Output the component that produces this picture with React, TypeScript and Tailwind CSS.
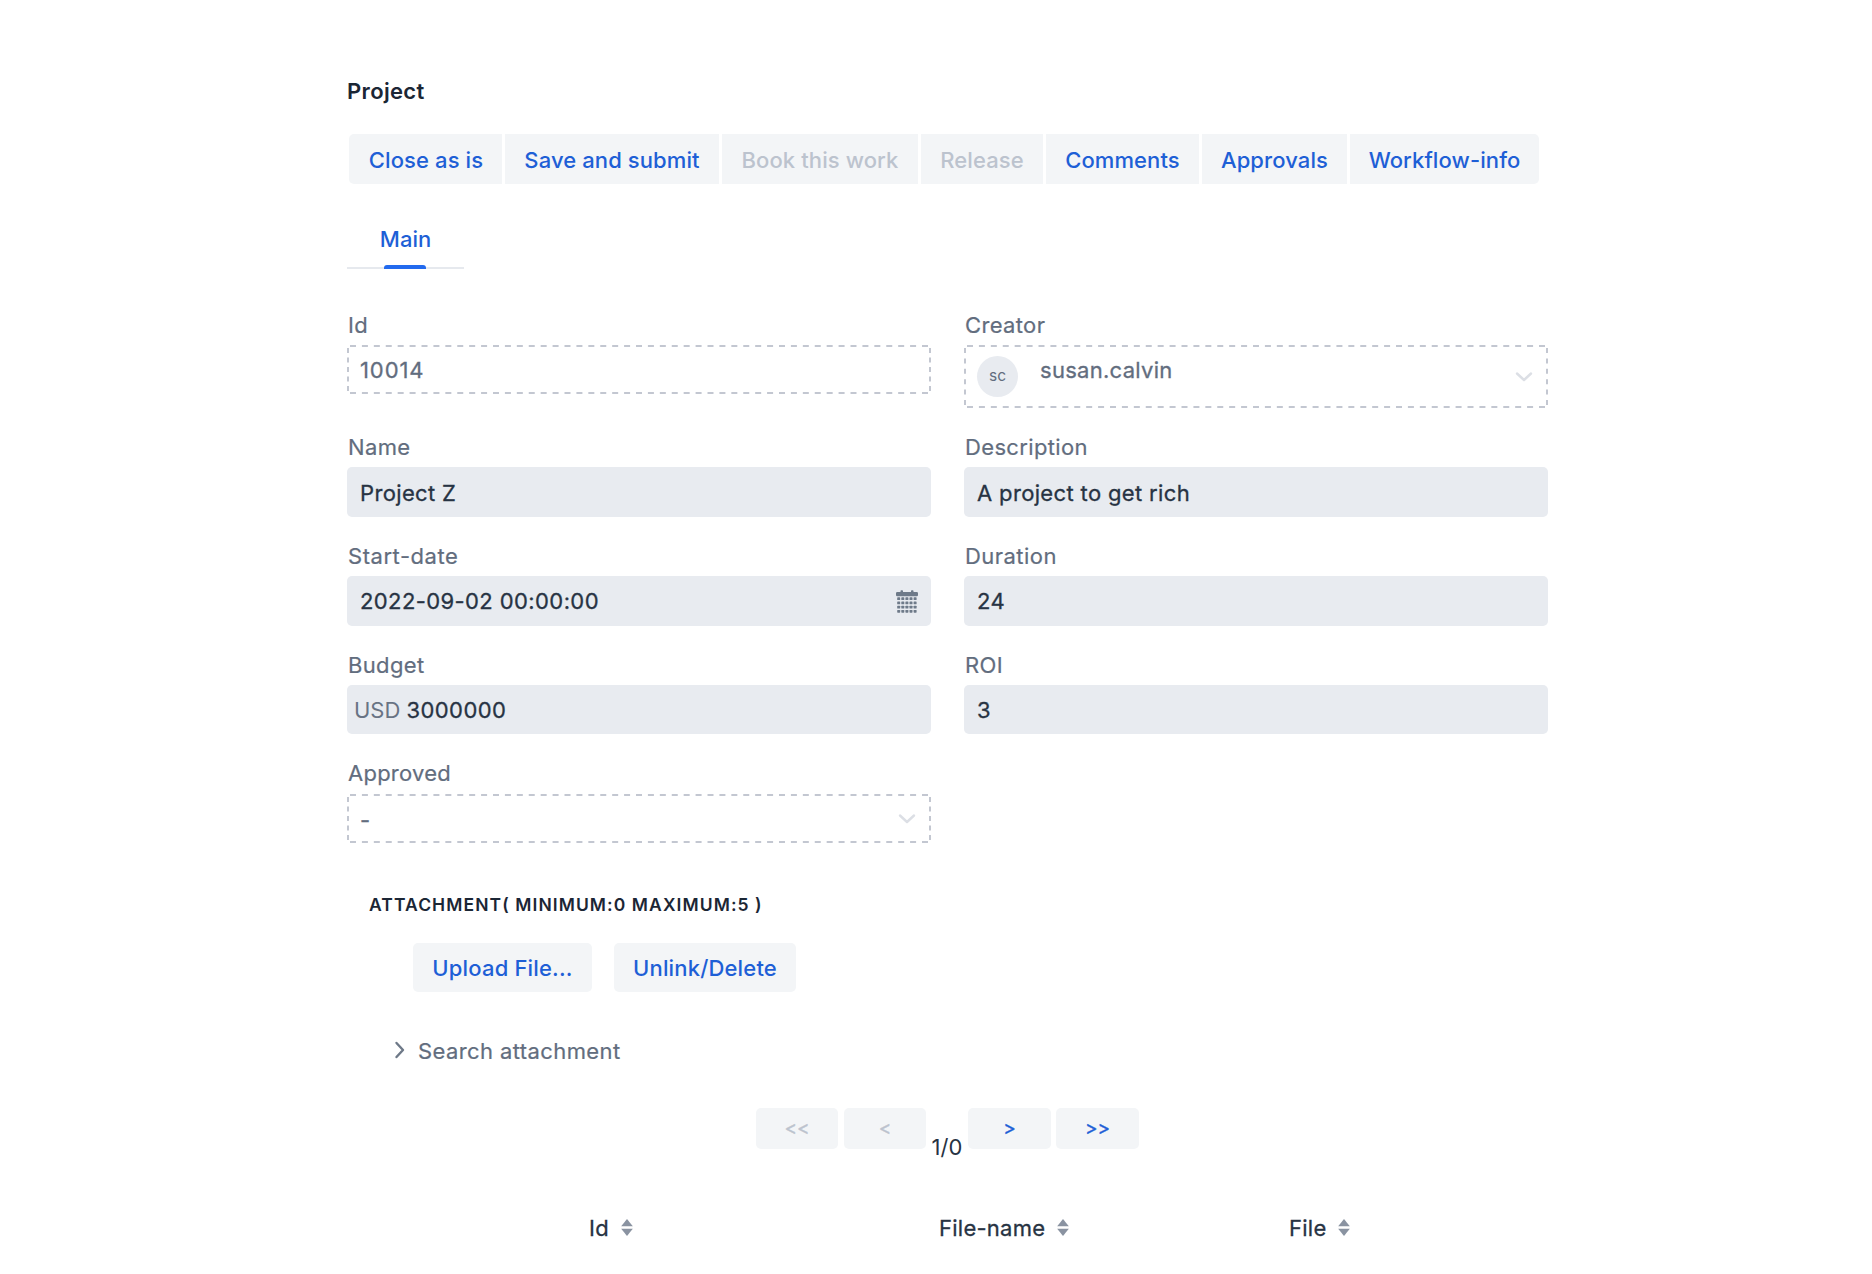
import type { ReactNode } from "react";

function Label({ children }: { children: ReactNode }) {
  return (
    <div className="mb-[6px] pl-px leading-[28px] text-[#626d7e] [-webkit-text-stroke:0.2px]">{children}</div>
  );
}

/* Evenly spaced dashed outline for read-only fields. */
function DashedOutline({ height }: { height: number }) {
  const width = 584;
  const pattern = (length: number, dash: number, count: number) => `${dash} ${(length - dash) / count - dash}`;
  const horizontal = pattern(width - 6, 6, 48);
  const vertical = pattern(height - 6, 5, height > 50 ? 5 : 4);
  return (
    <svg
      className="pointer-events-none absolute inset-0"
      width={width}
      height={height}
      stroke="#c3c7d1"
      strokeWidth="2"
      fill="none"
    >
      <path d={`M3 1H${width - 3}M3 ${height - 1}H${width - 3}`} strokeDasharray={horizontal} />
      <path d={`M1 3V${height - 3}M${width - 1} 3V${height - 3}`} strokeDasharray={vertical} />
    </svg>
  );
}

function ReadonlyBox({ height, className, children }: { height: number; className: string; children: ReactNode }) {
  return (
    <div
      className={`relative flex justify-between pr-[2px] pl-[13px] leading-[30px] text-[#626d7e] [-webkit-text-stroke:0.3px] ${className}`}
    >
      <DashedOutline height={height} />
      {children}
    </div>
  );
}

function InputBox({ className, children }: { className: string; children: ReactNode }) {
  return (
    <div
      className={`flex items-center rounded-[5px] bg-[#e8ebf0] text-[#273343] [-webkit-text-stroke:0.3px] ${className}`}
    >
      {children}
    </div>
  );
}

function ChevronDown({ className }: { className: string }) {
  return (
    <svg className={className} width="18" height="12" viewBox="0 0 18 12" fill="none">
      <path d="M2 2.5 L9 9 L16 2.5" stroke="#dcdfe5" strokeWidth="2.4" strokeLinecap="round" strokeLinejoin="round" />
    </svg>
  );
}

function CalendarIcon() {
  const rows = [8.3, 12.5, 16.7, 20.9];
  const cols = [1.2, 5.3, 9.4, 13.5, 17.6];
  return (
    <svg width="22" height="24" viewBox="0 0 22 24" fill="#6e7a89">
      <path d="M1.200 3H4.500V2a.8.8 0 0 1 .8-.8h.9A.8.8 0 0 1 7 2v1h8V2a.8.8 0 0 1 .8-.8h.9a.8.8 0 0 1 .8.8v1h3.300A1.200 1.200 0 0 1 22 4.200V6a1.200 1.200 0 0 1-1.200 1.200H1.200A1.200 1.200 0 0 1 0 6V4.200A1.200 1.200 0 0 1 1.200 3z" />
      {rows.map((y) => cols.map((x) => <rect key={`${x}-${y}`} x={x} y={y} width="3" height="2.800" rx="0.6" />))}
    </svg>
  );
}

function Sorter() {
  return (
    <svg width="12" height="18" viewBox="0 0 12 18" fill="#8a93a1">
      <path d="M6 0L11.800 7.300H0.200z" />
      <path d="M6 17L11.800 9.800H0.200z" />
    </svg>
  );
}

const actions = [
  { label: "Close as is", size: "w-[153px] rounded-l-[5px] pl-px" },
  { label: "Save and submit", size: "w-[214px]" },
  { label: "Book this work", size: "w-[196px]", disabled: true },
  { label: "Release", size: "w-[122px]", disabled: true },
  { label: "Comments", size: "w-[153px]" },
  { label: "Approvals", size: "w-[145px]" },
  { label: "Workflow-info", size: "w-[189px] rounded-r-[5px]" },
];

const pageButton =
  "flex h-[41px] items-center justify-center rounded-[5px] bg-[#f3f5f7] pt-[2px] text-[19px] tracking-normal [-webkit-text-stroke:0.35px]";

export default function App() {
  return (
    <div className="h-[1274px] overflow-hidden bg-white pl-[347px] pt-[76px] font-['Inter',sans-serif] text-[22px] tracking-[0.35px] text-[#273343]">
      <h1 className="leading-[30px] font-semibold text-[#1b2635]">Project</h1>

      <div className="mt-[28px] ml-[2px] flex gap-[3px]">
        {actions.map((a) => (
          <button
            key={a.label}
            className={`h-[50px] bg-[#f3f5f7] pt-[2px] font-medium tracking-[0.1px] whitespace-nowrap ${a.disabled ? "text-[#bcc3ce]" : "text-[#1e5fd6]"} ${a.size}`}
          >
            {a.label}
          </button>
        ))}
      </div>

      <div className="mt-[40px] flex h-[45px] w-[117px] flex-col items-center border-b-2 border-[#e6e9ee]">
        <span className="leading-[30px] font-medium tracking-normal text-[#1e5fd6]">Main</span>
      </div>
      <div className="relative -mt-[4px] ml-[37px] h-[4px] w-[42px] rounded-t-[3px] bg-[#226aee]" />

      <div className="mt-[42px] grid grid-cols-[584px_584px] grid-rows-[97px_84px_84px_84px_83px] gap-x-[33px] gap-y-[25px]">
        <div>
          <Label>Id</Label>
          <ReadonlyBox height={49} className="h-[49px] items-center pt-px tracking-[0.9px]">
            10014
          </ReadonlyBox>
        </div>
        <div>
          <Label>Creator</Label>
          <ReadonlyBox height={63} className="h-[63px]">
            <div className="flex">
              <span className="mt-[11px] flex size-[41px] items-center justify-center rounded-full bg-[#e8ebf0] pb-px text-[15.5px] tracking-normal [-webkit-text-stroke:0px]">
                sc
              </span>
              <span className="mt-[10px] ml-[22px] tracking-[0.28px]">susan.calvin</span>
            </div>
            <ChevronDown className="mt-[26px] mr-[13px]" />
          </ReadonlyBox>
        </div>
        <div>
          <Label>Name</Label>
          <InputBox className="h-[50px] pl-[13px] pt-[2px]">Project Z</InputBox>
        </div>
        <div>
          <Label>Description</Label>
          <InputBox className="h-[50px] pl-[13px] pt-[2px]">A project to get rich</InputBox>
        </div>
        <div>
          <Label>
            <span className="tracking-[0.55px]">Start-date</span>
          </Label>
          <InputBox className="h-[50px] justify-between pr-[13px] pl-[13px]">
            <span className="tracking-[0.4px]">2022-09-02 00:00:00</span>
            <CalendarIcon />
          </InputBox>
        </div>
        <div>
          <Label>
            <span className="tracking-[0.45px]">Duration</span>
          </Label>
          <InputBox className="h-[50px] pl-[13px]">24</InputBox>
        </div>
        <div>
          <Label>Budget</Label>
          <InputBox className="h-[49px] gap-[6px] pl-[7px] pt-px">
            <span className="tracking-normal text-[#687384] [-webkit-text-stroke:0px]">USD</span>
            <span className="tracking-[0.45px]">3000000</span>
          </InputBox>
        </div>
        <div>
          <Label>ROI</Label>
          <InputBox className="h-[49px] pl-[13px] pt-px">3</InputBox>
        </div>
        <div className="-mt-px">
          <Label>
            <span className="tracking-[0.25px]">Approved</span>
          </Label>
          <ReadonlyBox height={49} className="mt-[7px] h-[49px] items-center">
            <span className="pt-[2px]">-</span>
            <ChevronDown className="mr-[13px]" />
          </ReadonlyBox>
        </div>
      </div>

      <h2 className="mt-[47px] ml-[22px] leading-[30px] text-[17.500px] font-semibold tracking-[1.08px] whitespace-nowrap text-[#1b2635]">
        ATTACHMENT( MINIMUM:0 MAXIMUM:5 )
      </h2>

      <div className="mt-[23px] ml-[66px] flex gap-[22px] font-medium tracking-[0.17px] text-[#1e5fd6]">
        <button className="h-[49px] w-[179px] rounded-[5px] bg-[#f3f5f7] pt-[2px]">Upload File...</button>
        <button className="h-[49px] w-[182px] rounded-[5px] bg-[#f3f5f7] pt-[2px]">Unlink/Delete</button>
      </div>

      <div className="mt-[44px] ml-[47px] flex items-center leading-[30px] text-[#626d7e] [-webkit-text-stroke:0.2px]">
        <svg className="-mt-[2px]" width="12" height="18" viewBox="0 0 12 18" fill="none">
          <path d="M2.500 2L9 9L2.500 16" stroke="#6e7988" strokeWidth="2.400" strokeLinecap="round" strokeLinejoin="round" />
        </svg>
        <span className="ml-[12px] tracking-[0.4px]">Search attachment</span>
      </div>

      <div className="mt-[42px] ml-[409px] flex h-[56px]">
        <button className={`${pageButton} w-[82px] text-[#bcc3ce]`}>&lt;&lt;</button>
        <button className={`${pageButton} ml-[6px] w-[82px] text-[#bcc3ce]`}>&lt;</button>
        <span className="mt-[24px] w-[42px] text-center leading-[30px] tracking-normal">1/0</span>
        <button className={`${pageButton} w-[83px] text-[#1e5fd6]`}>&gt;</button>
        <button className={`${pageButton} ml-[5px] w-[83px] text-[#1e5fd6]`}>&gt;&gt;</button>
      </div>

      <div className="mt-[49px] ml-[242px] grid grid-cols-[350px_350px_200px] leading-[30px] tracking-[0.25px] [-webkit-text-stroke:0.3px]">
        {["Id", "File-name", "File"].map((h) => (
          <div key={h} className="flex items-center gap-[12px]">
            <span>{h}</span>
            <Sorter />
          </div>
        ))}
      </div>
    </div>
  );
}
